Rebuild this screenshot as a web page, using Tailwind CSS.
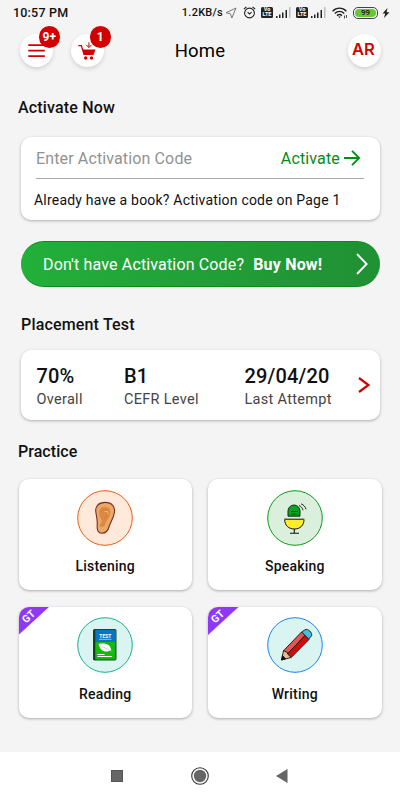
<!DOCTYPE html>
<html lang="en">
<head>
<meta charset="utf-8">
<title>Home</title>
<script src="https://cdn.jsdelivr.net/npm/@tailwindcss/browser@4"></script>
</head>
<body class="bg-[#f4f4f4]">
<div class="w-[400px] h-[800px] overflow-hidden flex flex-col bg-[#f4f4f4] font-['Roboto',sans-serif] text-[#111] whitespace-nowrap">
  <!-- status bar -->
  <div class="h-[25px] shrink-0 flex items-center justify-between pl-[13px] pr-[10px]">
    <span class="text-[12.5px] font-medium tracking-[0.200px] pt-[1px]">10:57 PM</span>
    <div class="flex items-center">
      <span class="text-[11px] leading-[16px] pt-[1px] font-medium tracking-[0.250px] mr-[2px]">1.2KB/s</span>
      <svg class="w-[12px] h-[12px] mr-[6px]" viewBox="0 0 12 12" fill="none" stroke="#777" stroke-width="1"><path d="M11 1 L1 5.8 L5.4 6.7 L6.8 11 Z"/></svg>
      <svg class="w-[13px] h-[13px] mr-[5px]" viewBox="0 0 13 13" fill="none" stroke="#222" stroke-width="1.1"><circle cx="6.5" cy="7" r="4.9"/><path d="M.8 3.2 L3.4 1 M12.2 3.2 L9.6 1 M4.6 6.2 L6.5 8 L8.6 6.2"/></svg>
      <span class="w-[12px] h-[11px] rounded-[1.5px] bg-[#222] text-white text-[5.500px] leading-[5.300px] font-bold text-center mr-[3px]">Vo<br>LTE</span>
      <svg class="w-[15px] h-[11px] mr-[5px]" viewBox="0 0 15 11" fill="#222"><path d="M0 9h1.500v2H0zM3 7.500h1.500V11H3zM6 5.500h1.500V11H6zM9.500 3H11v8H9.500z"/><path fill="#bbb" d="M13 0h1.500v11H13z"/></svg>
      <span class="w-[12px] h-[11px] rounded-[1.5px] bg-[#222] text-white text-[5.500px] leading-[5.300px] font-bold text-center mr-[3px]">Vo<br>LTE</span>
      <svg class="w-[15px] h-[11px] mr-[6px]" viewBox="0 0 15 11" fill="#222"><path d="M0 9h1.500v2H0zM3 7.500h1.500V11H3zM6 5.500h1.500V11H6zM9.500 3H11v8H9.500z"/><path fill="#bbb" d="M13 0h1.500v11H13z"/></svg>
      <svg class="w-[16px] h-[12px] mr-[5px]" viewBox="0 0 16 12" fill="none" stroke="#222" stroke-width="1.400"><path d="M.6 4.200 C4.500 .1 10.500 .1 14.400 4.200 M2.800 6.500 C5.600 3.700 9.400 3.700 12.200 6.500 M5 8.600 C6.600 7.200 8.400 7.200 10 8.600"/><path d="M6.200 9.500h2.600L7.500 11z" fill="#222" stroke="none"/><path d="M12.500 8.500v3M14.500 8v3" stroke-width=".8"/></svg>
      <span class="w-[25px] h-[12px] rounded-[5px] border border-[#444] p-[1px] mr-[4px] flex"><span class="flex-1 rounded-[4px] bg-[#66c832] text-[8px] leading-[8.500px] font-medium text-center">99</span></span>
      <svg class="w-[8px] h-[10px]" viewBox="0 0 8 10" fill="#222"><path d="M5.500 0 L.5 5.600 H3.200 L2 10 L7.500 4.200 H4.600 Z"/></svg>
    </div>
  </div>

  <!-- header -->
  <header class="h-[51px] shrink-0 grid grid-cols-3 items-center px-[19.500px]">
    <div class="flex gap-[18px]">
      <div class="relative size-[33px] rounded-full bg-white shadow-[0_2px_4px_rgba(0,0,0,0.15)]">
        <svg class="size-[33px]" viewBox="0 0 33 33" stroke="#d20000" stroke-width="1.700"><path d="M8.300 11.200h16.500M8.300 16.700h16.500M8.300 22.200h16.500"/></svg>
        <span class="absolute left-[19px] -top-[8px] size-[21.500px] rounded-full bg-[#d20000] text-white text-[12px] leading-[22px] font-bold text-center">9+</span>
      </div>
      <div class="relative size-[33px] rounded-full bg-white shadow-[0_2px_4px_rgba(0,0,0,0.15)]">
        <svg class="size-[33px]" viewBox="0 0 33 33" fill="#d20000"><path d="M11.300 15.400 H24.500 L22.500 21 H13.200 Z"/><path d="M7.300 11.600 H10.300 L13.300 21" fill="none" stroke="#d20000" stroke-width="1.300"/><circle cx="14.700" cy="24" r="1.700"/><circle cx="20.500" cy="24" r="1.700"/><path d="M17.900 8.300v5.200M15.200 10.800l2.700 2.700 2.700-2.700" fill="none" stroke="#d20000" stroke-width="1"/></svg>
        <span class="absolute left-[19px] -top-[8px] size-[21.500px] rounded-full bg-[#d20000] text-white text-[12px] leading-[22px] font-bold text-center">1</span>
      </div>
    </div>
    <h1 class="pt-[2px] text-[18.500px] font-normal text-center tracking-[0.200px] text-black">Home</h1>
    <div class="justify-self-end size-[33px] rounded-full bg-white shadow-[0_2px_4px_rgba(0,0,0,0.15)] text-[#d20000] text-[16.500px] leading-[31px] font-semibold flex justify-center font-['Inter',sans-serif]"><span class="-ml-[1px]">AR</span></div>
  </header>

  <main class="flex flex-col">
    <h2 class="mt-[20px] ml-[18px] h-6 leading-6 text-[16px] font-medium tracking-[0.170px]">Activate Now</h2>
    <section class="mt-[17px] mx-[20.500px] h-[83px] rounded-[10px] bg-white shadow-[0_1px_3px_rgba(0,0,0,0.3)] px-[15.500px]">
      <div class="h-[42px] flex items-center justify-between border-b border-[#aaa] pt-[2px]">
        <span class="text-[16px] text-[#929292] tracking-[0.130px]">Enter Activation Code</span>
        <span class="flex items-center text-[16px] text-[#068c16] pr-[4px] tracking-[0.150px]">Activate
          <svg class="w-[16px] h-[16px] ml-[4px] -mt-[2px]" viewBox="0 0 16 16" fill="none" stroke="#068c16" stroke-width="1.900"><path d="M0 8h15M8 .8 15.200 8 8 15.200"/></svg>
        </span>
      </div>
      <p class="-ml-[2px] leading-[43px] text-[14px] tracking-[0.200px]">Already have a book? Activation code on Page 1</p>
    </section>

    <div class="mt-[21px] mx-[20.500px] h-[46px] rounded-full bg-gradient-to-r from-[#22b03a] to-[#209034] border-y border-[#098d19] text-white text-[16px] flex items-center pl-[22.500px] pr-[12px]">
      <span class="pt-[2px] tracking-[0.150px]">Don't have Activation Code?</span>
      <span class="pt-[2px] ml-[9px] font-bold tracking-[0.200px]">Buy Now!</span>
      <svg class="ml-auto w-[12px] h-[22px]" viewBox="0 0 12 22" fill="none" stroke="#fff" stroke-width="1.900"><path d="M1 1 10.600 11 1 21"/></svg>
    </div>

    <h2 class="mt-[26px] ml-[21px] h-6 leading-6 text-[16px] font-medium tracking-[0.170px]">Placement Test</h2>
    <section class="mt-[13px] mx-[20.500px] h-[70px] rounded-[10px] bg-white shadow-[0_1px_3px_rgba(0,0,0,0.3)] pl-[16px] pr-[10px] grid grid-cols-[87.500px_120.500px_1fr_auto] items-center">
      <div class="pt-[4px]"><div class="text-[20px] leading-[24px] font-medium tracking-[0.150px]">70%</div><div class="text-[14.500px] leading-[23px] text-[#444] tracking-[0.300px]">Overall</div></div>
      <div class="pt-[4px]"><div class="text-[20px] leading-[24px] font-medium tracking-[0.150px]">B1</div><div class="text-[14.500px] leading-[23px] text-[#444] tracking-[0.300px]">CEFR Level</div></div>
      <div class="pt-[4px]"><div class="text-[20px] leading-[24px] font-medium tracking-[0.150px]">29/04/20</div><div class="text-[14.500px] leading-[23px] text-[#444] tracking-[0.300px]">Last Attempt</div></div>
      <svg class="w-[12px] h-[16px]" viewBox="0 0 12 16" fill="none" stroke="#d20000" stroke-width="2.200"><path d="M1 1 10.500 8 1 15"/></svg>
    </section>

    <h2 class="mt-[20px] ml-[18px] h-6 leading-6 text-[16px] font-medium tracking-[0.050px]">Practice</h2>
    <div class="mt-[15px] mx-[18.500px] grid grid-cols-2 gap-x-[16px] gap-y-[16.500px]">
      <div class="h-[111px] rounded-[10px] bg-white shadow-[0_1px_3px_rgba(0,0,0,0.3)] flex flex-col items-center pt-[10.500px]">
        <svg class="size-[56px]" viewBox="0 0 56 56"><circle cx="28" cy="28" r="27.300" fill="#ffe9da" stroke="#f05a14"/>
          <path d="M19 23 C17.500 16 22 12.400 28 12.400 C35 12.400 38.500 17 37.300 23 C36.500 28 34 31 32.300 36 C31 41 29 43.200 25 43.200 C21 43.200 19.800 40 20.200 35 C20.600 30 19.500 27 19 23Z" fill="#e9aa69" stroke="#7c2b20" stroke-width="1.100"/>
          <path d="M22.500 25 C21 19.500 24 16.700 28 16.700 C32.500 16.700 34.200 20 33 24.500 C32 29 29.500 30 28.500 33.500 C27.700 36.500 25 38 23 36 C22 34.500 24 34 24.500 32 C25.500 29.500 22.800 29 22.500 25Z" fill="#dc8a43"/>
          <path d="M24 22 C25 18.500 31.500 18.500 31 23 C30.500 25.500 28.500 26 27.500 29" fill="none" stroke="#cf7a3a" stroke-width=".9"/>
          <path d="M27.500 21.500h3.500v3" fill="none" stroke="#f0b87f" stroke-width=".9"/>
        </svg>
        <span class="mt-[10.500px] leading-[20px] text-[14px] font-medium tracking-[0.200px]">Listening</span>
      </div>
      <div class="h-[111px] rounded-[10px] bg-white shadow-[0_1px_3px_rgba(0,0,0,0.3)] flex flex-col items-center pt-[10.500px]">
        <svg class="size-[56px]" viewBox="0 0 56 56"><circle cx="28" cy="28" r="27.300" fill="#daf0dd" stroke="#0b9a18"/>
          <path d="M21 26.200V21 A6 6 0 0 1 33 21V26.200Z" fill="#08a520" stroke="#102c14" stroke-width="1"/>
          <path d="M24 21.500h7M24 24h7" stroke="#064c10" stroke-width=".8"/>
          <path d="M17.700 29.500 H37 C37 35.500 33 39 27.400 39 C21.700 39 17.700 35.500 17.700 29.500Z" fill="#ffec2b" stroke="#111" stroke-width="1"/>
          <path d="M17.200 29h20.200" stroke="#777" stroke-width="1.200"/>
          <path d="M27.300 39v4M23 43.200h9" stroke="#111" stroke-width="1.100"/>
          <path d="M32 15.500 C34.200 16.400 35.500 18 36 20.300 M34 13.800 C37 15 38.400 17 39 19.300" fill="none" stroke="#222" stroke-width="1"/>
        </svg>
        <span class="mt-[10.500px] leading-[20px] text-[14px] font-medium tracking-[0.200px]">Speaking</span>
      </div>
      <div class="relative overflow-hidden h-[111px] rounded-[10px] bg-white shadow-[0_1px_3px_rgba(0,0,0,0.3)] flex flex-col items-center pt-[10px]">
        <div class="absolute left-0 top-0 w-[31px] h-[28.500px] bg-[#9038fa] [clip-path:polygon(0_0,100%_0,0_100%)]"><span class="absolute left-[2px] top-[4px] w-[16px] text-center -rotate-[43deg] text-[10.500px] leading-[12px] font-bold text-white">GT</span></div>
        <svg class="size-[56px]" viewBox="0 0 56 56"><circle cx="28" cy="28" r="27.300" fill="#daf4f1" stroke="#14b38f"/>
          <rect x="16.500" y="12.500" width="22.500" height="30.500" rx="1" fill="#14ba0b" stroke="#174c20"/>
          <path d="M17.500 13h21v12h-21z" fill="#0874c4"/><path d="M17.400 12.500v30.500" stroke="#143c22" stroke-width="1.700"/>
          <text x="28.400" y="21" text-anchor="middle" font-family="Roboto" font-size="5" font-weight="700" fill="#fff">TEST</text><path d="M22 22.300h12.500" stroke="#b8d8ee" stroke-width=".8"/>
          <path d="M21.500 27 C29 25.500 34 28 34 33.500 C27 36.500 23 33 21.500 27Z" fill="#fff"/><path d="M25 29.500 L35.500 34.500" stroke="#9bdd96" stroke-width=".7"/>
          <path d="M20.500 37.500h7M20.500 39.500h14.500" stroke="#fff" stroke-width="1"/>
        </svg>
        <span class="mt-[11px] leading-[20px] text-[14px] font-medium tracking-[0.200px]">Reading</span>
      </div>
      <div class="relative overflow-hidden h-[111px] rounded-[10px] bg-white shadow-[0_1px_3px_rgba(0,0,0,0.3)] flex flex-col items-center pt-[10px]">
        <div class="absolute left-0 top-0 w-[31px] h-[28.500px] bg-[#9038fa] [clip-path:polygon(0_0,100%_0,0_100%)]"><span class="absolute left-[2px] top-[4px] w-[16px] text-center -rotate-[43deg] text-[10.500px] leading-[12px] font-bold text-white">GT</span></div>
        <svg class="size-[56px]" viewBox="0 0 56 56"><circle cx="28" cy="28" r="27.300" fill="#daf4f1" stroke="#1683f5"/>
          <g stroke="#151515" stroke-width=".9" stroke-linejoin="round">
            <path d="M34.500 15 L38 12.800 C41 11.200 45.500 15.500 44.600 18.800 L41.500 22.300 Z" fill="#45bfe0"/>
            <path d="M16.500 33.700 L34.500 15 L38 18.500 L20.500 37Z" fill="#e65353"/>
            <path d="M20.500 37 L38 18.500 L42 22.500 L24.200 40.500Z" fill="#d20d0d"/>
            <path d="M14.500 43 L16.500 33.700 L20.500 35.500 L20.500 37 L24.200 40.500Z" fill="#efb98c"/>
            <path d="M14.500 43 L15.500 38.600 L18.700 41.800Z" fill="#151515"/>
          </g>
        </svg>
        <span class="mt-[11px] leading-[20px] text-[14px] font-medium tracking-[0.200px]">Writing</span>
      </div>
    </div>
  </main>

  <!-- system navigation -->
  <nav class="mt-auto h-[48px] shrink-0 bg-white grid grid-cols-[35px_1fr_auto_1fr_35px] items-center">
    <span></span>
    <span class="ml-[76px] size-[12px] bg-[#666] border border-[#555]"></span>
    <svg class="size-[18px]" viewBox="0 0 18 18"><circle cx="9" cy="9" r="8.300" fill="none" stroke="#333" stroke-width="1.100"/><circle cx="9" cy="9" r="6.200" fill="#666"/></svg>
    <svg class="ml-[67px] w-[12px] h-[14px]" viewBox="0 0 12 14"><path d="M0 7 11.500 0V14Z" fill="#666"/></svg>
    <span></span>
  </nav>
</div>
</body>
</html>
